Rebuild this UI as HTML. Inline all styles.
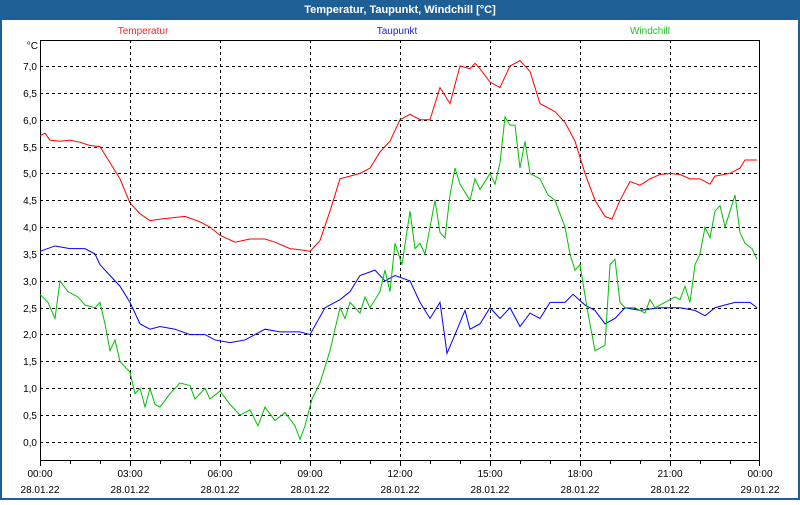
<!DOCTYPE html>
<html><head><meta charset="utf-8"><style>
body{margin:0;width:800px;height:500px;overflow:hidden;background:#fff;font-family:"Liberation Sans",sans-serif}
</style></head><body>
<svg width="800" height="500" xmlns="http://www.w3.org/2000/svg" font-family="Liberation Sans, sans-serif" font-size="10">
<rect x="0" y="0" width="800" height="500" fill="#1e6096"/>
<rect x="2" y="20" width="796" height="478" fill="#fff"/>
<text x="400" y="13" fill="#fff" font-weight="bold" font-size="11" text-anchor="middle">Temperatur, Taupunkt, Windchill [°C]</text>
<text x="143" y="34" fill="#ff2020" text-anchor="middle">Temperatur</text>
<text x="397" y="34" fill="#2020d0" text-anchor="middle">Taupunkt</text>
<text x="650" y="34" fill="#20c020" text-anchor="middle">Windchill</text>
<g stroke="#000" stroke-width="1" stroke-dasharray="3,3" shape-rendering="crispEdges">
<path d="M40 66.5H760M40 93.5H760M40 120.5H760M40 147.5H760M40 173.5H760M40 200.5H760M40 227.5H760M40 254.5H760M40 281.5H760M40 308.5H760M40 334.5H760M40 361.5H760M40 388.5H760M40 415.5H760M40 442.5H760"/>
<path d="M130.5 40V460M220.5 40V460M310.5 40V460M400.5 40V460M490.5 40V460M580.5 40V460M670.5 40V460"/>
</g>
<g stroke="#000" shape-rendering="crispEdges" fill="none">
<rect x="40.5" y="40.5" width="719" height="420"/>
<path d="M70.5 461V464M100.5 461V464M160.5 461V464M190.5 461V464M250.5 461V464M280.5 461V464M340.5 461V464M370.5 461V464M430.5 461V464M460.5 461V464M520.5 461V464M550.5 461V464M610.5 461V464M640.5 461V464M700.5 461V464M730.5 461V464M40.5 461V466M130.5 461V466M220.5 461V466M310.5 461V466M400.5 461V466M490.5 461V466M580.5 461V466M670.5 461V466M759.5 461V466"/>
</g>
<g fill="#000" text-anchor="end">
<text x="38" y="49">°C</text>
<text x="37" y="70">7,0</text><text x="37" y="97">6,5</text><text x="37" y="124">6,0</text><text x="37" y="151">5,5</text><text x="37" y="177">5,0</text><text x="37" y="204">4,5</text><text x="37" y="231">4,0</text><text x="37" y="258">3,5</text><text x="37" y="285">3,0</text><text x="37" y="312">2,5</text><text x="37" y="338">2,0</text><text x="37" y="365">1,5</text><text x="37" y="392">1,0</text><text x="37" y="419">0,5</text><text x="37" y="446">0,0</text>
</g>
<g fill="#000" text-anchor="middle">
<text x="40" y="477">00:00</text><text x="130" y="477">03:00</text><text x="220" y="477">06:00</text><text x="310" y="477">09:00</text><text x="400" y="477">12:00</text><text x="490" y="477">15:00</text><text x="580" y="477">18:00</text><text x="670" y="477">21:00</text><text x="760" y="477">00:00</text>
<text x="40" y="493">28.01.22</text><text x="130" y="493">28.01.22</text><text x="220" y="493">28.01.22</text><text x="310" y="493">28.01.22</text><text x="400" y="493">28.01.22</text><text x="490" y="493">28.01.22</text><text x="580" y="493">28.01.22</text><text x="670" y="493">28.01.22</text><text x="760" y="493">29.01.22</text>
</g>
<g transform="matrix(1,0,0,-53.71,0,442)" fill="none" stroke-width="1">
<polyline vector-effect="non-scaling-stroke" stroke="#ff0000" points="40,5.7 45,5.75 50,5.62 60,5.6 70,5.62 80,5.58 90,5.52 100,5.5 110,5.2 120,4.9 130,4.45 140,4.25 150,4.12 160,4.15 175,4.18 185,4.2 200,4.1 210,4.0 220,3.85 235,3.72 250,3.78 265,3.78 275,3.72 290,3.6 300,3.58 310,3.55 320,3.75 330,4.3 340,4.9 350,4.95 360,5.0 370,5.1 380,5.4 390,5.6 400,6.0 410,6.1 420,6.0 430,6.0 440,6.6 450,6.3 460,7.0 470,6.95 475,7.05 480,6.95 490,6.7 500,6.6 510,7.0 520,7.1 530,6.9 540,6.3 555,6.15 565,5.95 575,5.6 585,5.0 595,4.5 605,4.2 612,4.15 620,4.5 630,4.85 640,4.78 650,4.9 660,4.98 670,5.0 680,4.98 690,4.9 700,4.9 710,4.8 715,4.95 730,5.0 740,5.1 745,5.25 757,5.25"/>
<polyline vector-effect="non-scaling-stroke" stroke="#0000ff" points="40,3.55 55,3.65 70,3.6 85,3.6 95,3.5 100,3.3 110,3.1 120,2.9 130,2.6 140,2.2 150,2.1 160,2.15 175,2.1 190,2.0 205,2.0 215,1.9 230,1.85 245,1.9 255,2.0 265,2.1 280,2.05 300,2.05 310,2.0 325,2.5 340,2.65 350,2.8 360,3.1 375,3.2 385,3.0 395,3.1 410,3.0 420,2.6 430,2.3 440,2.6 447,1.65 455,2.0 465,2.45 470,2.1 480,2.2 490,2.5 500,2.3 510,2.5 520,2.15 530,2.4 540,2.3 550,2.6 565,2.6 573,2.75 585,2.55 595,2.45 605,2.2 615,2.3 625,2.5 640,2.45 660,2.5 680,2.5 695,2.45 705,2.35 715,2.5 725,2.55 735,2.6 750,2.6 757,2.5"/>
<polyline vector-effect="non-scaling-stroke" stroke="#00c000" points="40,2.75 48,2.6 55,2.3 60,3.0 68,2.8 78,2.7 85,2.55 95,2.5 100,2.6 105,2.2 110,1.7 115,1.9 120,1.5 130,1.3 135,0.9 140,1.0 145,0.65 150,1.0 155,0.7 160,0.65 170,0.9 180,1.1 190,1.05 195,0.8 205,1.0 210,0.8 220,0.95 230,0.7 240,0.5 250,0.6 258,0.3 265,0.65 275,0.4 285,0.55 295,0.3 300,0.05 305,0.3 312,0.8 320,1.1 330,1.7 340,2.5 345,2.3 350,2.6 360,2.4 365,2.7 370,2.5 380,2.8 385,3.2 390,2.8 395,3.7 402,3.3 410,4.3 415,3.6 420,3.7 425,3.5 430,4.0 435,4.5 440,3.9 445,3.8 450,4.6 455,5.1 460,4.8 470,4.5 475,4.9 480,4.7 490,5.0 495,4.8 500,5.2 505,6.05 510,5.9 515,5.9 520,5.1 525,5.6 530,5.0 540,4.9 548,4.6 555,4.5 565,4.0 570,3.5 575,3.2 580,3.3 587,2.5 595,1.7 600,1.75 605,1.8 610,3.3 615,3.4 620,2.6 625,2.5 635,2.5 645,2.4 650,2.65 655,2.5 665,2.6 675,2.7 680,2.65 685,2.9 690,2.6 695,3.3 700,3.5 705,4.0 710,3.8 715,4.3 720,4.4 725,4.0 730,4.3 735,4.6 740,3.9 745,3.7 752,3.6 757,3.4"/>
</g>
</svg>
</body></html>
